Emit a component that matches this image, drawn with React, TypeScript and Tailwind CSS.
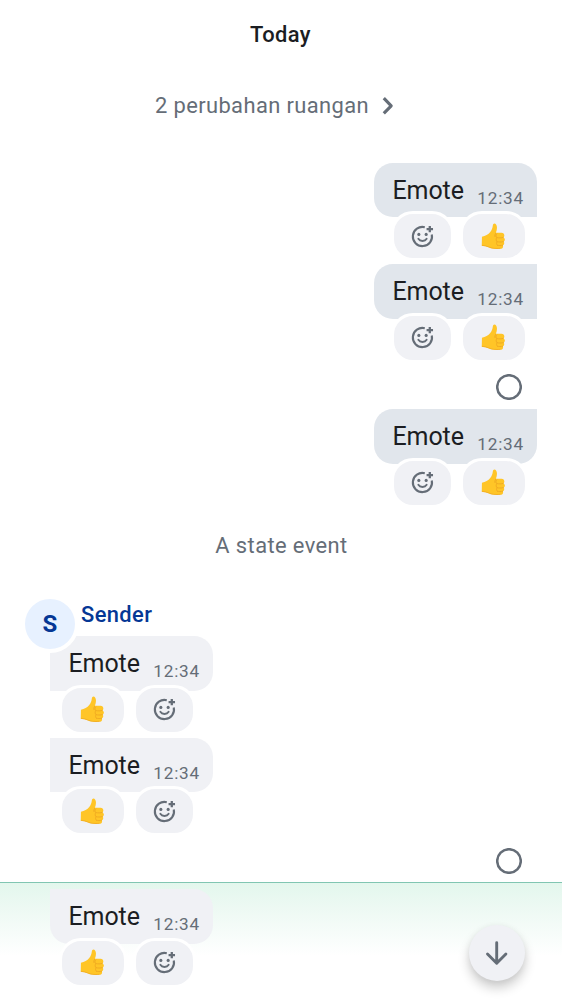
import React from "react";

function ThumbsUp() {
  return (
    <svg width="24.5" height="26.5" viewBox="0 0 26 28" fill="none" className="relative -left-px">
      <path
        d="M1 14.4 C4.6 13.8 7.8 12.5 9.8 9.6 C11.6 7 12.3 5 12.5 2.8 C12.7 .3 14.8 -.1 16 1.5 C17.6 3.7 17 7 15.8 10.4 L21.7 10.4 C24.8 10.4 25.6 13.7 23.9 15.2 C25.9 16.4 25.7 18.9 24 19.7 C25.2 21.1 24.6 23.1 23.2 23.6 C24 25.7 22.7 27.3 20.6 27.3 C15.5 27.6 11.3 27.4 8 25.7 C5.8 24.6 3.6 24.1 .8 24 Z"
        fill="#FFC527"
      />
      <path
        d="M15.6 10.8 C14.8 12.3 14.4 13 14.7 14.2 M23.6 15.2 C21.5 16 19 15.8 16.9 15.5 M23.7 19.7 C21.5 20.4 19 20.2 17.1 19.8 M22.9 23.6 C21 24.1 19 23.9 17.4 23.6 M16.8 11.5 C15.3 12.7 15.5 14.8 16.9 15.5 C15.7 16.7 15.9 19 17.1 19.8 C16.1 20.8 16.4 22.9 17.4 23.6"
        stroke="#EFAA22"
        strokeWidth="1"
        strokeLinecap="round"
      />
      <path d="M1 23.7 C3.6 23.8 5.8 24.3 8 25.3 C11.3 27 15.5 27.2 20.6 26.9" stroke="#EFAA22" strokeWidth=".8" />
    </svg>
  );
}

function AddReaction() {
  return (
    <svg width="25" height="25" viewBox="0 0 24 24" fill="none" stroke="#656D77" strokeWidth="2">
      <path d="M14.2 3.1 A9.2 9.2 0 1 0 20.9 10" />
      <path d="M19 1.8 V8 M15.9 4.9 H22.1" strokeWidth="2.2" />
      <path d="M8 14.2 C9.7 17 14.3 17 16 14.2" strokeWidth="1.8" strokeLinecap="round" />
      <circle cx="8.5" cy="10" r="1.5" fill="#656D77" stroke="none" />
      <circle cx="15.5" cy="10" r="1.5" fill="#656D77" stroke="none" />
    </svg>
  );
}

const chip =
  "box-content flex h-[44px] items-center justify-center rounded-[22px] border-[3px] border-white bg-[#f0f1f5]";

function Reactions({ mine }: { mine?: boolean }) {
  return (
    <div className={`relative -mt-[6px] flex gap-[6px] ${mine ? "mr-[9.5px] flex-row-reverse" : "ml-[9px]"}`}>
      <div className={`${chip} w-[61.5px]`}>
        <ThumbsUp />
      </div>
      <div className={`${chip} w-[57px]`}>
        <AddReaction />
      </div>
    </div>
  );
}

function Message({ mine, shape }: { mine?: boolean; shape: string }) {
  return (
    <div className={`flex h-[101.5px] flex-col ${mine ? "items-end pr-[25px]" : "items-start pl-[50px]"}`}>
      <div
        className={`flex h-[54.5px] w-[163px] shrink-0 justify-between pl-[18.5px] pr-[13px] ${shape} ${
          mine ? "bg-[#e1e6ec]" : "bg-[#f0f1f5]"
        }`}
      >
        <span className="pt-[10px] text-[25px] leading-[36px] tracking-[-0.1px] text-[#1b1d22]">Emote</span>
        <span className="pt-[22px] text-[17.2px] leading-[26px] tracking-[0.78px] text-[#656d77]">12:34</span>
      </div>
      <Reactions mine={mine} />
    </div>
  );
}

function SendingStatus() {
  return (
    <div className="flex justify-end pr-[40px]">
      <svg width="26" height="26" viewBox="0 0 26 26" fill="none">
        <circle cx="13" cy="13" r="11.8" stroke="#656D77" strokeWidth="2.5" />
      </svg>
    </div>
  );
}

export default function App() {
  return (
    <main className="relative flex h-[1000px] w-[562px] flex-col overflow-hidden bg-white font-['Roboto',sans-serif]">
      <div className="flex h-[68px] items-center justify-center pr-px pt-[2px] text-[21.9px] font-medium tracking-[0.4px] text-[#1b1d22]">
        Today
      </div>
      <div className="flex h-[94.5px] items-start justify-center pr-[13px] pt-[22px] text-[21.9px] leading-[32px] tracking-[0.4px] text-[#656d77]">
        <span>2 perubahan ruangan</span>
        <svg className="ml-[12px] mr-[-1px] mt-[6px]" width="14" height="20" viewBox="0 0 14 20" fill="none">
          <path d="M2.8 2.2 L10.2 9.8 L2.8 17.4" stroke="#656D77" strokeWidth="3.1" strokeLinejoin="round" />
        </svg>
      </div>
      <Message mine shape="rounded-[19px] rounded-br-none" />
      <Message mine shape="rounded-l-[19px]" />
      <div className="h-[43.5px] pt-[8.5px]">
        <SendingStatus />
      </div>
      <Message mine shape="rounded-[19px] rounded-tr-none" />
      <div className="flex h-[84px] items-center justify-center pb-[12px] pl-px text-[21.9px] tracking-[0.4px] text-[#656d77]">
        A state event
      </div>
      <div className="relative z-10 -mb-[16.5px] flex h-[58px] items-start pl-[21px]">
        <div className="box-content flex size-[50px] items-center justify-center rounded-full border-[4px] border-white bg-[#e7f1ff] text-[24px] font-bold text-[#053795]">
          S
        </div>
        <span className="ml-[2px] mt-[4px] text-[21.9px] font-medium leading-[32px] tracking-[0.4px] text-[#053795]">
          Sender
        </span>
      </div>
      <Message shape="rounded-r-[19px] rounded-bl-none" />
      <Message shape="rounded-r-[19px] rounded-bl-none" />
      <div className="h-[42.5px] pt-[8.5px]">
        <SendingStatus />
      </div>
      <section className="h-[118px] shrink-0 border-t border-[#81c6b2] bg-[linear-gradient(to_bottom,#e3f7ed_0px,#edf9f3_25px,#ffffff_73px)] pt-[6.5px]">
        <Message shape="rounded-[19px] rounded-tl-none" />
      </section>
      <button
        aria-label="Scroll to bottom"
        className="absolute left-[468.5px] top-[925px] flex size-[56px] items-center justify-center rounded-full bg-[#f0f1f5] shadow-[0_7px_12px_rgba(0,0,0,0.2),0_1px_6px_rgba(0,0,0,0.05)]"
      >
        <svg width="26" height="28" viewBox="0 0 26 28" fill="none">
          <path d="M12.7 3.8 V24 M3.5 15 L12.7 24.2 L21.9 15" stroke="#656D77" strokeWidth="2.9" strokeLinecap="round" strokeLinejoin="round" />
        </svg>
      </button>
    </main>
  );
}
